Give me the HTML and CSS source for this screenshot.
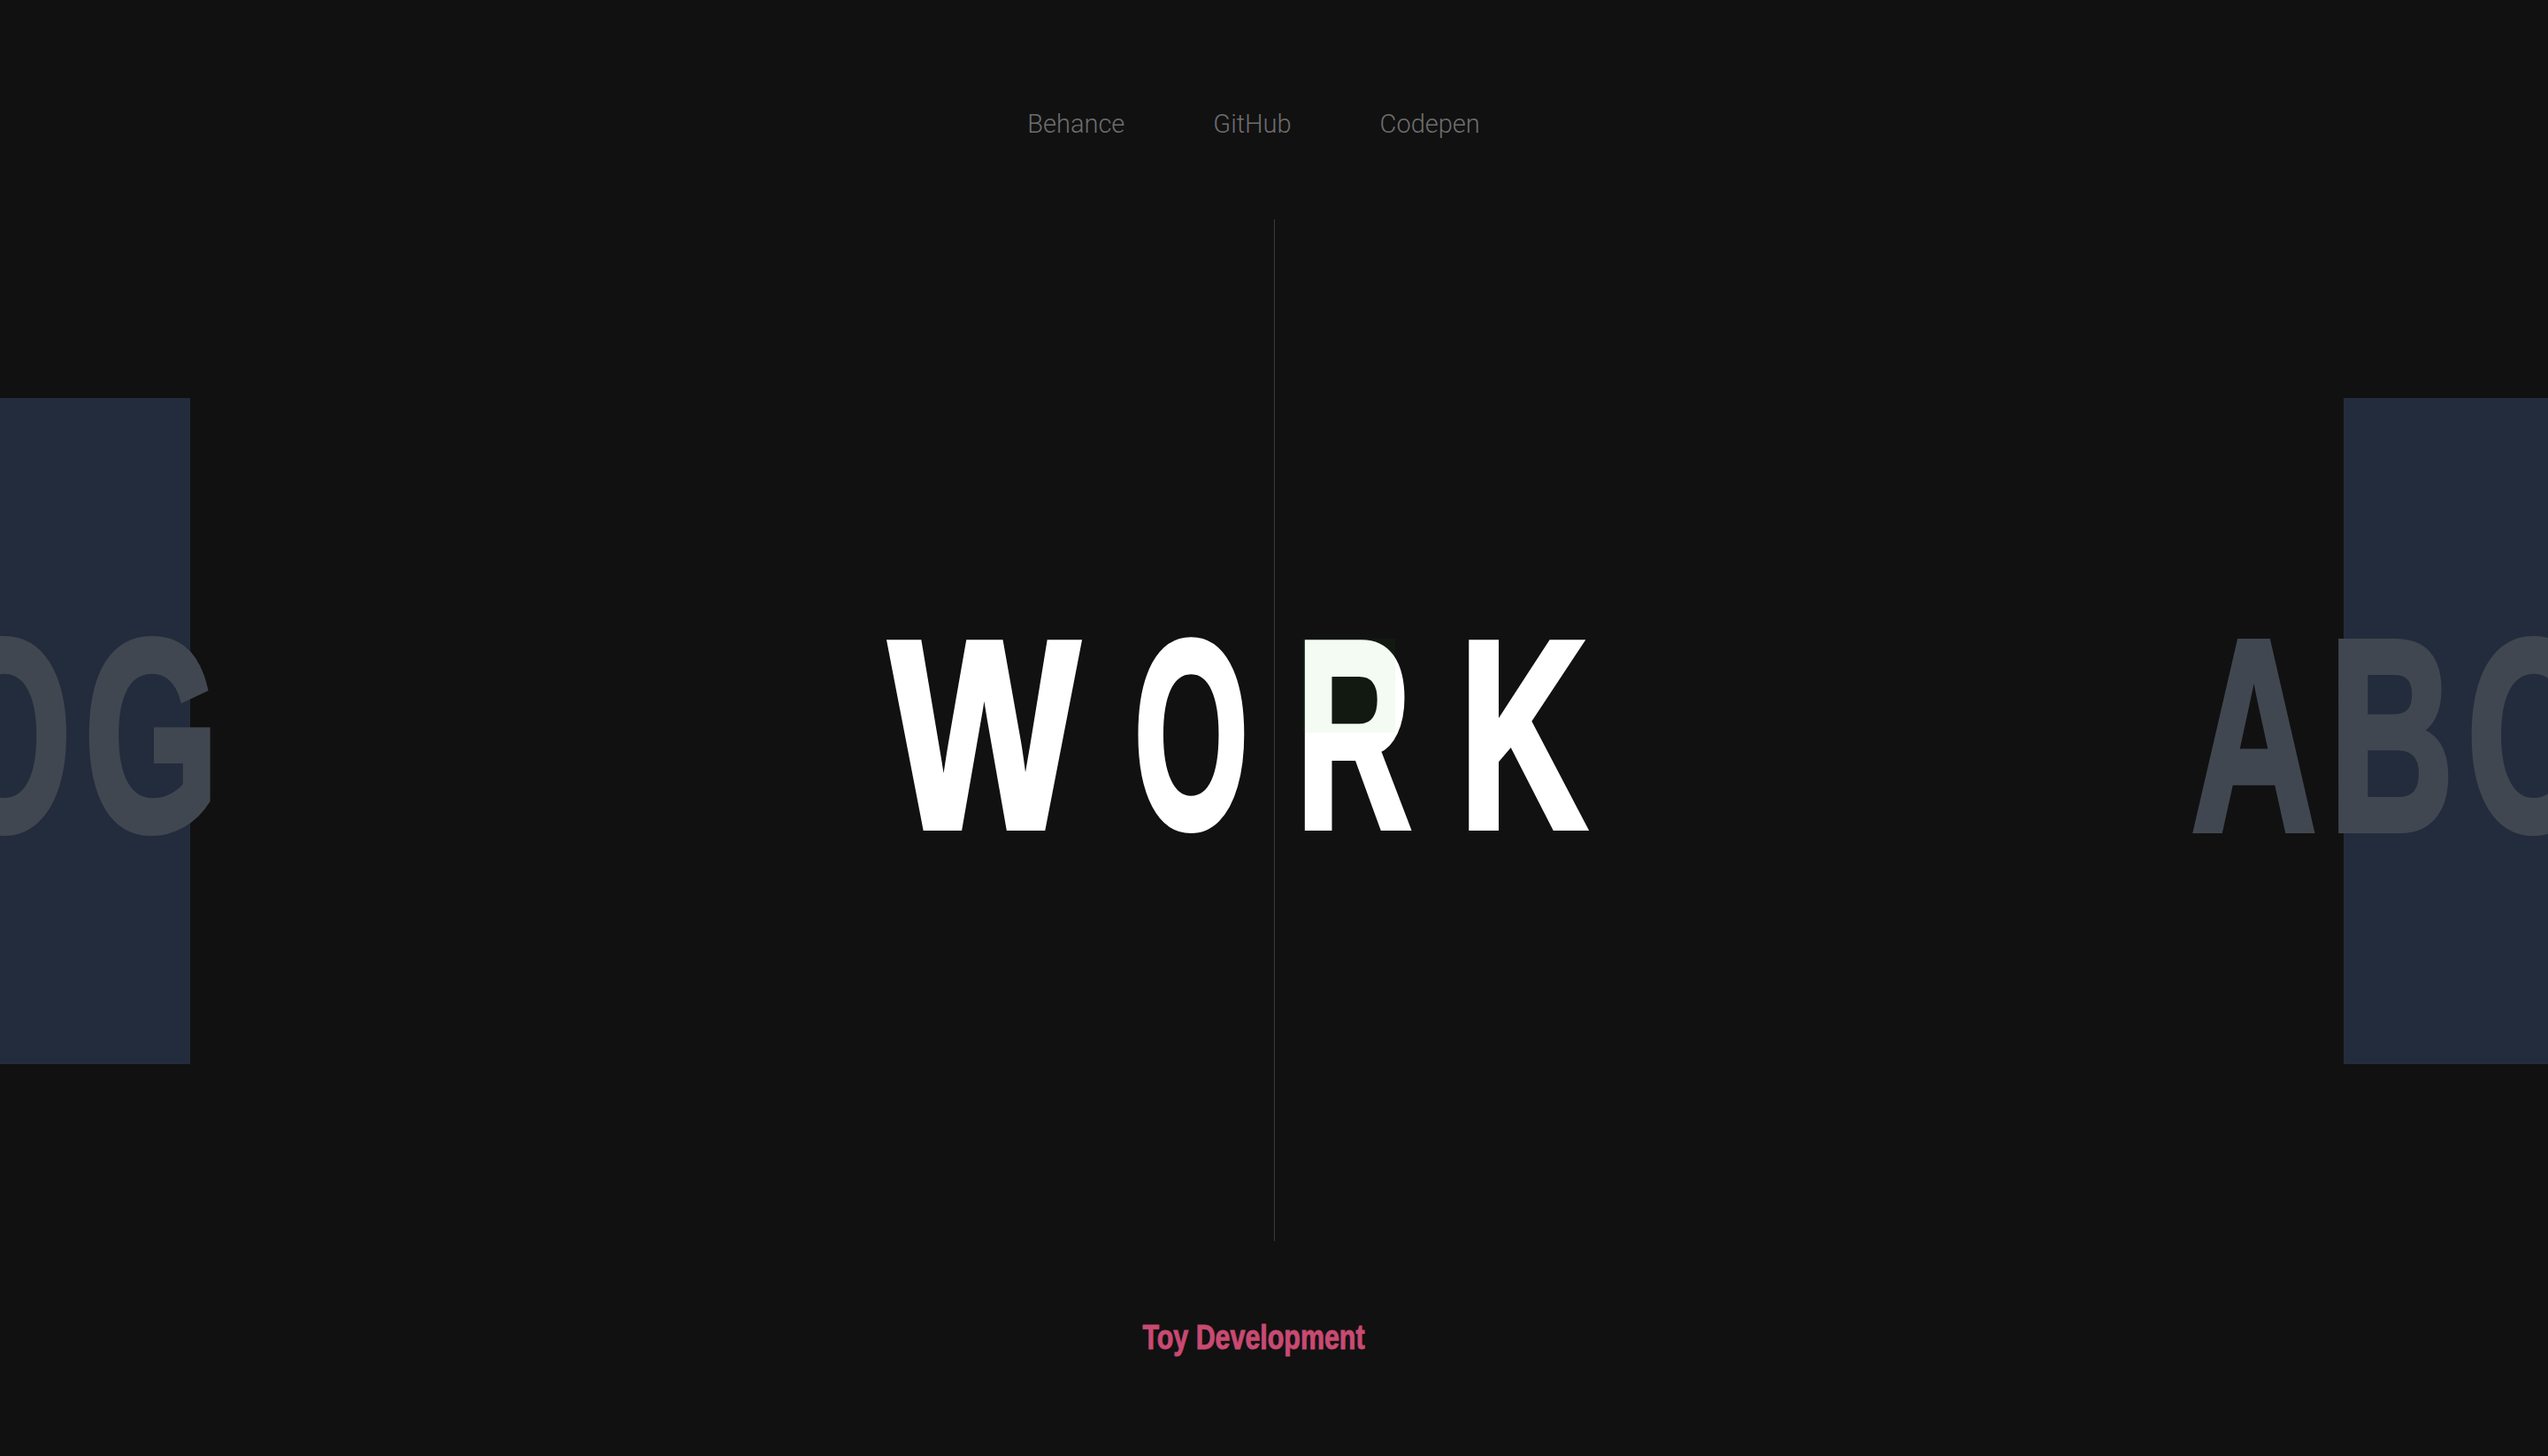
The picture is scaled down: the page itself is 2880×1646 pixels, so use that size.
FILE: index.html
```html
<!DOCTYPE html>
<html lang="en">
<head>
<meta charset="utf-8">
<title>Work</title>
<link rel="stylesheet" href="styles.css">
</head>
<body>
  <header class="nav">
    <a class="nav__link" href="#">Behance</a>
    <a class="nav__link" href="#">GitHub</a>
    <a class="nav__link" href="#">Codepen</a>
  </header>

  <main class="stage">
    <div class="panel panel--left"></div>
    <div class="panel panel--right"></div>

    <div class="carousel">
      <div class="carousel__side carousel__side--left">
        <span class="word word--ghost word--left">BLOG</span>
      </div>
      <div class="carousel__center">
        <span class="word word--active">
          <span class="glyph glyph--w"><span class="glyph__char">W</span></span>
          <span class="glyph glyph--o"><span class="glyph__char">O</span></span>
          <span class="glyph glyph--r"><span class="glyph__char">R</span></span>
          <span class="glyph glyph--k"><span class="glyph__char">K</span></span>
        </span>
      </div>
      <div class="carousel__side carousel__side--right">
        <span class="word word--ghost word--right">ABOUT</span>
      </div>
    </div>

    <div class="divider"></div>
    <div class="highlight"></div>
  </main>

  <footer class="caption">
    <span class="caption__text">Toy Development</span>
  </footer>
</body>
</html>
```

FILE: styles.css
```css
html, body {
  margin: 0;
  padding: 0;
}

body {
  width: 2880px;
  height: 1646px;
  background: #111111;
  overflow: hidden;
  font-family: Roboto, "Liberation Sans", Arial, sans-serif;
}

/* top navigation */
.nav {
  display: flex;
  justify-content: center;
  gap: 100px;
  padding-top: 120px;
  padding-right: 46px;
  height: 40px;
}

.nav__link {
  font-family: Roboto, "Liberation Sans", Arial, sans-serif;
  font-weight: 300;
  font-size: 29px;
  line-height: 40px;
  color: #6e6e6e;
  text-decoration: none;
}

/* stage */
.stage {
  position: relative;
  margin-top: 88px;
  height: 1155px;
  padding-top: 10px;
  box-sizing: border-box;
  display: flex;
  align-items: center;
}

.panel {
  position: absolute;
  top: 202px;
  height: 753px;
  background: #232c3d;
}

.panel--left {
  left: 0;
  width: 215px;
}

.panel--right {
  right: 0;
  width: 231px;
}

.carousel {
  position: relative;
  width: 100%;
  display: grid;
  grid-template-columns: 1fr auto 1fr;
  align-items: center;
}

.carousel__side {
  display: flex;
  min-width: 0;
}

.carousel__side--left {
  justify-content: flex-end;
  padding-right: 740px;
}

.carousel__side--right {
  justify-content: flex-start;
  padding-left: 599px;
}

.carousel__center {
  display: flex;
  justify-content: center;
}

.word {
  display: inline-block;
  font-family: "Liberation Sans", Arial, sans-serif;
  font-weight: 700;
  line-height: 1;
  white-space: nowrap;
}

/* active word: each letter sized on its own */
.word--active {
  display: flex;
  gap: 60px;
  padding-right: 86px;
  font-size: 302px;
  color: #ffffff;
  -webkit-text-stroke: 8px #ffffff;
}

.glyph {
  display: flex;
  justify-content: center;
}

.glyph__char {
  display: block;
}

.glyph--w { width: 221px; }
.glyph--o { width: 127px; }
.glyph--r { width: 121px; }
.glyph--k { width: 141px; }

.glyph--w .glyph__char { transform: scaleX(0.75); }
.glyph--o .glyph__char { transform: scaleX(0.55); }
.glyph--r .glyph__char { transform: scaleX(0.595); }
.glyph--k .glyph__char { transform: scaleX(0.655); }

/* neighbouring words */
.word--ghost {
  font-size: 308px;
  color: #414750;
  -webkit-text-stroke: 8px #414750;
  letter-spacing: 23px;
  transform: scaleX(0.634);
}

.word--left {
  transform-origin: right center;
}

.word--right {
  transform-origin: left center;
}

.divider {
  position: absolute;
  left: 1440px;
  top: 0;
  bottom: 0;
  width: 1px;
  background: #3a3a3a;
}

.highlight {
  position: absolute;
  left: 1472px;
  top: 474px;
  width: 105px;
  height: 106px;
  background: rgba(17, 175, 17, 0.05);
}

/* caption */
.caption {
  display: flex;
  justify-content: center;
  padding-right: 46px;
  margin-top: 90px;
}

.caption__text {
  display: inline-block;
  font-family: "Liberation Sans", Arial, sans-serif;
  font-weight: 700;
  font-size: 38px;
  line-height: 1;
  color: #c84a72;
  -webkit-text-stroke: 1px #c84a72;
  transform: scaleX(0.8);
}
```
